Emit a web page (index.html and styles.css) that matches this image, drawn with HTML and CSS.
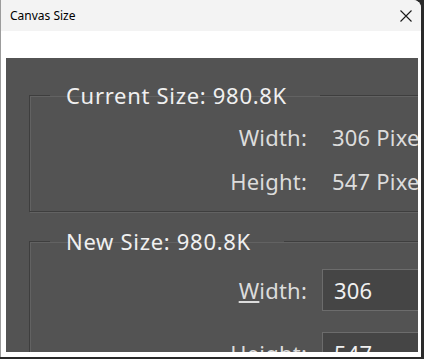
FILE: index.html
```html
<html lang="en">
<head>
    <meta charset="UTF-8">
    <meta name="viewport" content="width=device-width, initial-scale=1.0">
    <title>Canvas Size</title>
    <link rel="stylesheet" href="styles.css">
</head>
<body>
    <div class="window">
        <div class="titlebar">
            <span class="title">Canvas Size</span>
            <svg class="close" width="12" height="12" viewBox="0 0 12 12">
                <path d="M0.5 0.5 L11.5 11.5 M11.5 0.5 L0.5 11.5" stroke="#1a1a1a" stroke-width="1.1" fill="none"/>
            </svg>
        </div>
        <div class="client">
            <div class="panel">
                <fieldset class="group current">
                    <legend>Current Size: 980.8K</legend>
                    <div class="rows">
                        <div class="label">Width:</div>
                        <div class="value">306 Pixels</div>
                        <div class="label">Height:</div>
                        <div class="value">547 Pixels</div>
                    </div>
                </fieldset>
                <fieldset class="group new">
                    <legend>New Size: 980.8K</legend>
                    <div class="rows inputs">
                        <div class="label"><u>W</u>idth:</div>
                        <div class="field">306</div>
                        <div class="label">Height:</div>
                        <div class="field">547</div>
                    </div>
                </fieldset>
            </div>
        </div>
    </div>
</body>
</html>
```

FILE: styles.css
```css
body {
    margin: 0;
    background-color: #2a2a2a;
    font-family: "Noto Sans", sans-serif;
    overflow: hidden;
}

.window {
    width: 420px;
    height: 357px;
    background-color: #ffffff;
    border-left: 1px solid #9c9c9c;
    border-top-right-radius: 8px;
    overflow: hidden;
    display: flex;
    flex-direction: column;
}

.titlebar {
    height: 31px;
    flex: none;
    background-color: #f3f3f3;
    display: flex;
    align-items: center;
    justify-content: space-between;
    padding: 0 8px 0 9px;
}

.title {
    font-size: 12px;
    color: #000000;
}

.close {
    margin-right: 1px;
}

.client {
    padding: 27px 2px 0 5px;
}

.panel {
    width: 412px;
    height: 294px;
    background-color: #535353;
    overflow: hidden;
    padding: 23px 0 0 23px;
    box-sizing: border-box;
    color: #e6e6e6;
}

.group {
    width: 520px;
    margin: 0;
    padding: 0;
    border: 1px solid #3e3e3e;
    box-shadow: 1px 1px 0 #626262, inset 1px 1px 0 #626262;
    box-sizing: border-box;
}

.group legend {
    margin-left: 20px;
    padding: 0 33px 0 16px;
    font-size: 22px;
    letter-spacing: 0.7px;
    line-height: 28px;
    color: #f0f0f0;
}

.current {
    height: 131px;
}

.new {
    margin-top: 15px;
    height: 200px;
}

.rows {
    display: grid;
    grid-template-columns: 277px auto;
    column-gap: 25px;
    grid-auto-rows: 44px;
    align-items: center;
    padding-top: 6px;
    font-size: 22px;
    letter-spacing: 0.2px;
}

.label {
    text-align: right;
    color: #dcdcdc;
}

.value {
    color: #dcdcdc;
}

.rows.inputs {
    grid-auto-rows: 42px;
    row-gap: 21px;
    padding-top: 14px;
    column-gap: 15px;
}

.field {
    height: 42px;
    box-sizing: border-box;
    border: 1px solid #6c6c6c;
    background-color: #454545;
    padding-left: 11px;
    line-height: 40px;
    color: #f0f0f0;
}
```
